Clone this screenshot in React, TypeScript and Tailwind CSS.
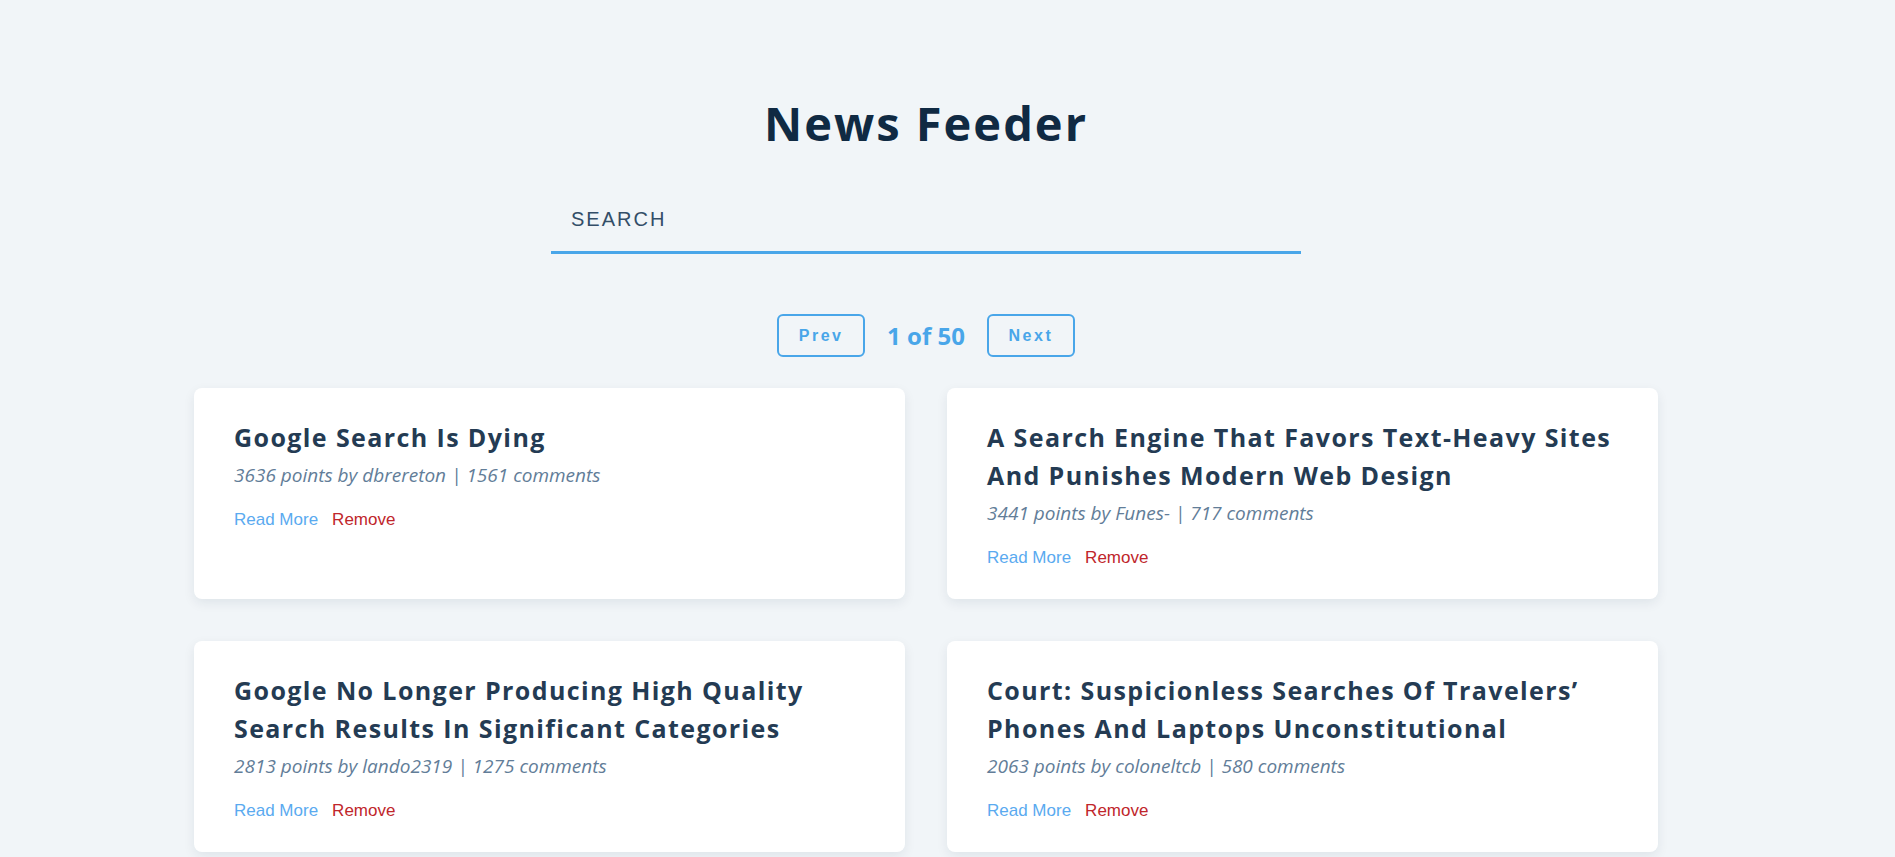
import { useEffect, useRef } from "react";

type Story = {
  id: number;
  title: string;
  points: number;
  author: string;
  comments: number;
};

const stories: Story[] = [
  { id: 1, title: "Google Search Is Dying", points: 3636, author: "dbrereton", comments: 1561 },
  { id: 2, title: "A Search Engine That Favors Text-Heavy Sites And Punishes Modern Web Design", points: 3441, author: "Funes-", comments: 717 },
  { id: 3, title: "Google No Longer Producing High Quality Search Results In Significant Categories", points: 2813, author: "lando2319", comments: 1275 },
  { id: 4, title: "Court: Suspicionless Searches Of Travelers’ Phones And Laptops Unconstitutional", points: 2063, author: "coloneltcb", comments: 580 },
  { id: 5, title: "Every Google Result Now Looks Like An Ad", points: 2011, author: "cmod", comments: 892 },
  { id: 6, title: "Search Engines Are Failing Us", points: 1840, author: "jonnycat", comments: 610 },
  { id: 7, title: "Why Is Search So Bad Now?", points: 1722, author: "kilroy123", comments: 803 },
  { id: 8, title: "Show HN: A Search Engine For Independent Websites", points: 1650, author: "mizzao", comments: 412 },
  { id: 9, title: "The Decline Of Usability In Search Results", points: 1589, author: "ajdude", comments: 544 },
  { id: 10, title: "How To Find Things Online When Search Fails", points: 1502, author: "tosh", comments: 377 },
];

function Card({ title, points, author, comments }: Story) {
  return (
    <article className="rounded-lg bg-white px-[40px] pt-[30px] pb-[29px] shadow-[0_4px_12px_rgba(16,42,67,0.08)]">
      <h4 className="font-['Open_Sans',sans-serif] text-[25px] leading-[38px] font-bold tracking-[1.4px] text-[#243b53]">
        {title}
      </h4>
      <p className="mt-[6px] font-['Open_Sans',sans-serif] text-[19px] leading-[27px] italic text-[#627d98]">
        {points} points by {author} | {comments} comments
      </p>
      <div className="mt-[19px] flex gap-[14px] font-['Liberation_Sans',Arial,sans-serif] text-[17px] leading-[24px]">
        <a className="text-[#5aaaf0]" href="#">
          Read More
        </a>
        <button className="text-[#c0262b]">Remove</button>
      </div>
    </article>
  );
}

export default function App() {
  const input = useRef<HTMLInputElement>(null);

  useEffect(() => {
    const el = input.current;
    if (el) {
      el.focus();
      el.setSelectionRange(el.value.length, el.value.length);
    }
  }, []);

  return (
    <div className="min-h-screen bg-[#f1f5f8]">
      <div className="flex flex-col items-center pr-[43px] pb-[60px]">
        <h1 className="mt-[93px] font-['Open_Sans',sans-serif] text-[47px] leading-[60px] font-bold tracking-[2px] text-[#102a43]">
          News Feeder
        </h1>
        <input
          ref={input}
          className="mt-[34px] h-[67px] w-[750px] border-b-[3px] border-[#49a6e9] bg-transparent pl-[20px] font-['Liberation_Sans',Arial,sans-serif] text-[20px] tracking-[2px] text-[#334e68] uppercase caret-[#102a43] outline-none"
          defaultValue="search"
        />
        <div className="mt-[60px] flex items-center gap-[22px]">
          <button className="h-[43px] w-[88px] rounded-md border-2 border-[#49a6e9] font-['Liberation_Sans',Arial,sans-serif] text-[16px] font-bold tracking-[2.5px] text-[#49a6e9]">
            Prev
          </button>
          <p className="font-['Open_Sans',sans-serif] text-[24px] font-bold text-[#49a6e9]">1 of 50</p>
          <button className="h-[43px] w-[88px] rounded-md border-2 border-[#49a6e9] font-['Liberation_Sans',Arial,sans-serif] text-[16px] font-bold tracking-[2.5px] text-[#49a6e9]">
            Next
          </button>
        </div>
        <section className="mt-[31px] grid w-[1464px] grid-cols-2 gap-[42px]">
          {stories.map((s) => (
            <Card key={s.id} {...s} />
          ))}
        </section>
      </div>
    </div>
  );
}
